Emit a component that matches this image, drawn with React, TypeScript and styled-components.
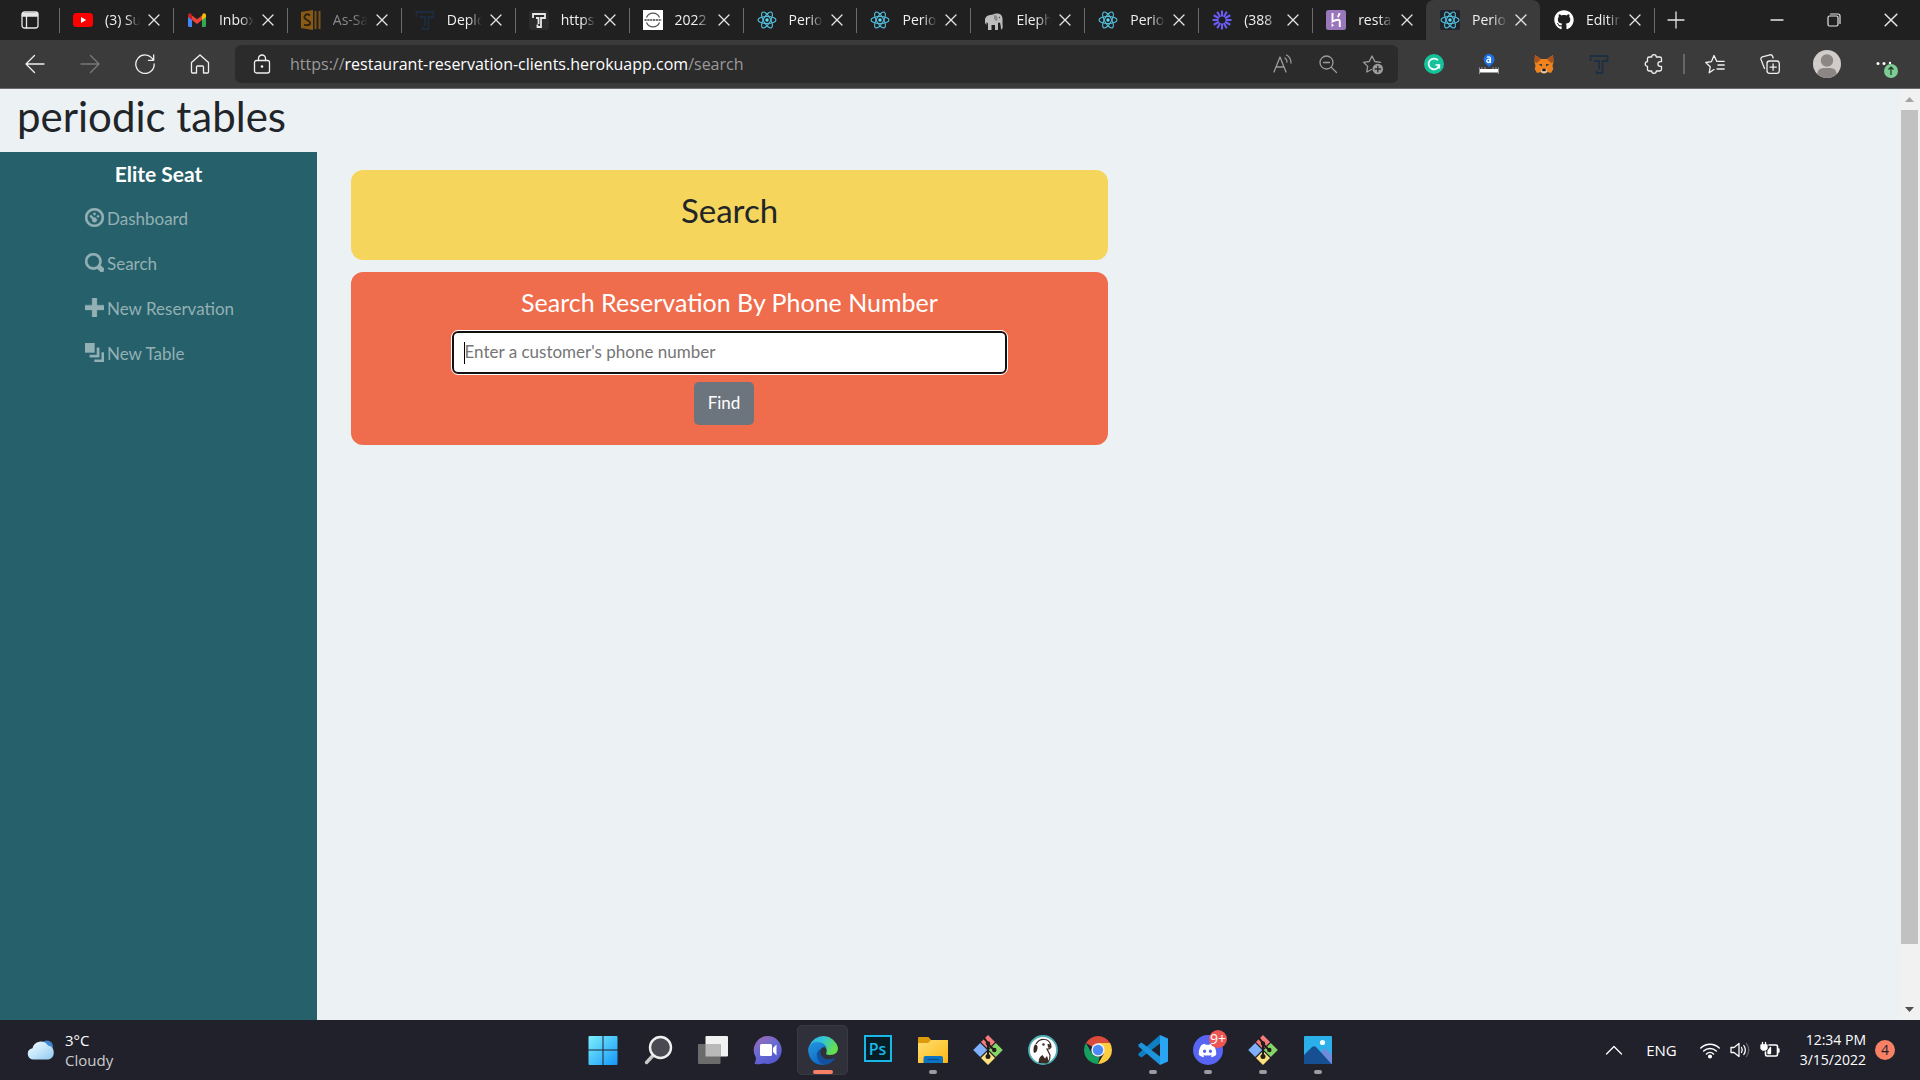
import React from "react";
import styled, { createGlobalStyle } from "styled-components";
import { FaDiscord, FaGithub } from "react-icons/fa";

const uiFont = `"Open Sans", "Noto Sans", sans-serif`;
const siteFont = `Lato, "Open Sans", sans-serif`;

const GlobalStyle = createGlobalStyle`
  *, *::before, *::after { box-sizing: border-box; }
  body { margin: 0; background: #ecf1f4; font-family: ${uiFont}; }
  button { border: 0; padding: 0; background: none; color: inherit; font: inherit; cursor: pointer; }
  a { color: inherit; text-decoration: none; }
  h1, h2, h3, h4, p, ul { margin: 0; padding: 0; }
  svg { display: block; flex: none; }
`;

const Screen = styled.div`
  display: flex;
  flex-direction: column;
  height: 100vh;
  overflow: hidden;
`;

/* ---------- tab strip ---------- */

const TabStrip = styled.header`
  display: flex;
  height: 40px;
  flex: none;
  background: #202020;
  color: #e6e6e6;
`;

const TabActions = styled.button`
  display: grid;
  place-items: center;
  width: 59px;
`;

const TabList = styled.div`
  display: flex;
  flex: 0 1 1595px;
  min-width: 0;
`;

const TabItem = styled.div<{ $active?: boolean; $divider: boolean }>`
  display: flex;
  align-items: center;
  flex: 1 1 0;
  min-width: 0;
  padding: 0 13px 0 14px;
  border-radius: 8px 8px 0 0;
  background: ${(p) => (p.$active ? "#3b3b3b" : "none")};
  background-image: ${(p) => (p.$divider ? "linear-gradient(#6b6b6b, #6b6b6b)" : "none")};
  background-size: 1px 25px;
  background-position: left 8px;
  background-repeat: no-repeat;
`;

const TabTitle = styled.span<{ $dim?: boolean }>`
  flex: 1;
  min-width: 0;
  margin: 0 8px 0 12px;
  overflow: hidden;
  white-space: nowrap;
  font-size: 14px;
  line-height: 20px;
  color: ${(p) => (p.$dim ? "#8a8a8a" : "#f0f0f0")};
  mask-image: linear-gradient(to right, #000 60%, transparent 100%);
`;

const TabClose = styled.button`
  display: grid;
  place-items: center;
  width: 12px;
  height: 20px;
`;

const NewTab = styled.button`
  display: grid;
  place-items: center;
  width: 44px;
  background: linear-gradient(#6b6b6b, #6b6b6b) left 8px / 1px 25px no-repeat;
`;

const WindowControls = styled.div`
  display: flex;
  margin-left: auto;
  padding-right: 1px;
`;

const WindowButton = styled.button`
  display: grid;
  place-items: center;
  width: 57px;
`;

/* ---------- toolbar ---------- */

const Toolbar = styled.nav`
  display: flex;
  align-items: center;
  height: 49px;
  flex: none;
  padding: 0 9px 0 7px;
  background: #3b3b3b;
  border-bottom: 1px solid #6a6a6a;
  color: #f0f0f0;
`;

const ToolButton = styled.button<{ $wide?: boolean }>`
  display: grid;
  place-items: center;
  width: ${(p) => (p.$wide ? 59 : 55)}px;
  height: 38px;
  flex: none;
`;

const AddressBar = styled.div`
  display: flex;
  align-items: center;
  flex: 1;
  min-width: 0;
  height: 38px;
  margin: 0 8px;
  padding: 0 3px 0 17px;
  border-radius: 6px;
  background: #2b2b2b;
`;

const Url = styled.a`
  flex: 1;
  min-width: 0;
  margin-left: 18px;
  overflow: hidden;
  white-space: nowrap;
  font-size: 16px;
  line-height: 24px;
  color: #9a9a9a;
`;

const UrlHost = styled.span`
  color: #ffffff;
`;

const AddressAction = styled.button`
  display: grid;
  place-items: center;
  width: 45px;
  height: 38px;
  color: #9c9c9c;
`;

const ToolDivider = styled.span`
  width: 2px;
  height: 20px;
  margin: 0 2px;
  background: #666666;
`;

/* ---------- web page ---------- */

const Viewport = styled.div`
  display: flex;
  flex: 1;
  min-height: 0;
`;

const Page = styled.div`
  display: flex;
  flex-direction: column;
  flex: 1;
  min-width: 0;
  font-family: ${siteFont};
  color: #212529;
`;

const SiteTitle = styled.h1`
  height: 63px;
  padding: 0 17px;
  font-size: 42px;
  line-height: 54px;
  font-weight: 400;
`;

const Body = styled.div`
  display: flex;
  flex: 1;
  min-height: 0;
`;

const Sidebar = styled.aside`
  width: 20%;
  max-width: 317px;
  flex: none;
  padding-top: 9px;
  background: #26606a;
  color: #ffffff;
`;

const Brand = styled.h2`
  font-size: 21px;
  line-height: 26px;
  font-weight: 700;
  text-align: center;
`;

const NavList = styled.ul`
  display: grid;
  gap: 21px;
  margin: 20px 0 0 85px;
  list-style: none;
`;

const NavLink = styled.a`
  display: flex;
  align-items: center;
  gap: 3px;
  height: 24px;
  font-size: 17px;
  line-height: 24px;
  color: #93b0b5;

  svg { margin-bottom: 4px; }
`;

const Main = styled.main`
  display: grid;
  grid-template-columns: 1fr 1fr;
  gap: 36px;
  align-items: start;
  flex: 1;
  padding: 18px 0 0 34px;
`;

const Column = styled.div`
  display: grid;
  gap: 12px;
`;

const TitleCard = styled.section`
  padding: 20px 14px 30px;
  border-radius: 12px;
  background: #f5d55c;
  text-align: center;
`;

const CardTitle = styled.h2`
  font-size: 33px;
  line-height: 40px;
  font-weight: 400;
`;

const SearchCard = styled.form`
  display: flex;
  flex-direction: column;
  align-items: center;
  padding: 14px 14px 20px;
  border-radius: 12px;
  background: #ef6c4d;
`;

const FieldLabel = styled.label`
  font-size: 25px;
  line-height: 32px;
  color: #ffffff;
`;

const PhoneInput = styled.input`
  width: 76%;
  height: 43px;
  margin: 13px 0 8px;
  padding: 0 10px 2px;
  border: 2px solid #101010;
  border-radius: 6px;
  outline: 1px solid #ffffff;
  caret-color: transparent;
  background: linear-gradient(#000, #000) 10px center / 1px 22px no-repeat #ffffff;
  font-family: ${siteFont};
  font-size: 17px;
  color: #212529;

  &::placeholder { color: #757575; opacity: 1; }
`;

const FindButton = styled.button`
  height: 43px;
  margin-right: 11px;
  padding: 0 14px 2px;
  border-radius: 5px;
  background: #6c757d;
  color: #ffffff;
  font-family: ${siteFont};
  font-size: 17px;
`;

const ScrollRail = styled.div`
  display: flex;
  flex-direction: column;
  width: 19px;
  flex: none;
  padding-right: 2px;
  background: #f1f1f1;
`;

const ScrollArrow = styled.button`
  display: grid;
  place-items: center;
  height: 21px;
  flex: none;
`;

const ScrollThumb = styled.div`
  flex: 834;
  background: #c1c1c1;
`;

const ScrollRest = styled.div`
  flex: 55;
`;

/* ---------- taskbar ---------- */

const Taskbar = styled.footer`
  display: grid;
  grid-template-columns: 1fr auto 1fr;
  align-items: center;
  height: 60px;
  flex: none;
  background: #21212c;
  color: #ffffff;
  font-size: 15px;
  line-height: 20px;
`;

const Weather = styled.button`
  display: flex;
  align-items: center;
  gap: 10px;
  margin-left: 27px;
  text-align: left;
`;

const WeatherText = styled.span`
  display: grid;
`;

const Muted = styled.span`
  color: #cccccc;
`;

const AppRow = styled.div`
  display: flex;
`;

const AppButton = styled.button<{ $active?: boolean }>`
  position: relative;
  display: grid;
  place-items: center;
  width: 51px;
  height: 50px;
  margin: 0 2px;
  border-radius: 5px;
  border: 1px solid ${(p) => (p.$active ? "#3a3a44" : "transparent")};
  background: ${(p) => (p.$active ? "#30303a" : "none")};
`;

const RunMark = styled.span<{ $active?: boolean }>`
  position: absolute;
  bottom: 0;
  left: 50%;
  translate: -50% 0;
  width: ${(p) => (p.$active ? 20 : 8)}px;
  height: 4px;
  border-radius: 2px;
  background: ${(p) => (p.$active ? "#f88064" : "#9b9ba0")};
`;

const CountBadge = styled.span`
  position: absolute;
  top: 4px;
  right: 5px;
  width: 18px;
  height: 18px;
  border-radius: 9px;
  background: #ee5555;
  font-size: 14px;
  line-height: 17px;
  text-align: center;
`;

const Tray = styled.div`
  display: flex;
  align-items: center;
  justify-content: flex-end;
  padding-right: 25px;
`;

const TrayButton = styled.button`
  display: grid;
  place-items: center;
  height: 40px;
  margin-right: 23px;
  font-size: 15px;
`;

const TrayStatus = styled.button`
  display: flex;
  align-items: center;
  gap: 10px;
  height: 40px;
  margin-right: 20px;
`;

const Clock = styled.button`
  display: grid;
  margin-right: 9px;
  text-align: right;
  font-size: 14px;
`;

const Notice = styled.button`
  width: 20px;
  height: 20px;
  border-radius: 10px;
  background: #f88064;
  color: #21212c;
  font-size: 14px;
  line-height: 20px;
`;

/* ---------- drawings ---------- */

type IconProps = { size?: number; box?: number; line?: number; children: React.ReactNode };

const LineIcon = ({ size = 20, box = 20, line = 1.3, children }: IconProps) => (
  <svg width={size} height={size} viewBox={`0 0 ${box} ${box}`} fill="none" stroke="currentColor" strokeWidth={line} strokeLinecap="round" strokeLinejoin="round" aria-hidden="true">
    {children}
  </svg>
);

const Art = ({ size = 20, box = 20, children }: IconProps) => (
  <svg width={size} height={size} viewBox={`0 0 ${box} ${box}`} aria-hidden="true">
    {children}
  </svg>
);

const Cross = ({ size = 12 }: { size?: number }) => (
  <LineIcon size={size} box={12}><path d="M1 1l10 10M11 1L1 11" /></LineIcon>
);

const YouTubeArt = () => (
  <Art><rect y="3" width="20" height="14" rx="3.5" fill="#f00" /><path d="M8 7l5.2 3L8 13z" fill="#fff" /></Art>
);

const GmailArt = () => (
  <Art>
    <path d="M1 5v10.500q0 1.500 1.500 1.500H5V8z" fill="#4285f4" />
    <path d="M19 5v10.500q0 1.500-1.500 1.500H15V8z" fill="#34a853" />
    <path d="M15 5.500V10l4-3V5q-.5-2.500-3-1.500z" fill="#fbbc04" />
    <path d="M5 5.500l5 3.800 5-3.800V10l-5 4-5-4z" fill="#ea4335" />
    <path d="M5 5.500V10L1 7V5q.5-2.500 3-1.500z" fill="#c5221f" />
  </Art>
);

const ScribeArt = () => (
  <Art>
    <path d="M0 2l12-2v20L0 18z" fill="#8a5a14" />
    <path d="M9 5.500Q6 3 4 5.500T6 10t3 4-6 .8" fill="none" stroke="#2a2115" strokeWidth="1.800" />
    <path d="M14.500 1v18M18.500 1v18" stroke="#7b5217" strokeWidth="2" />
  </Art>
);

const BracketTArt = ({ color, tile }: { color: string; tile?: boolean }) => (
  <Art>
    {tile && <rect width="20" height="20" rx="4" fill="#2c2c2c" />}
    <path d={tile ? "M4 8V4h12v4h-4v9H8.500v-2.500M7 8h2.500v6" : "M1.500 7V2h17v5h-5v12H7.500v-2.500M5 7h5v8.500"} fill="none" stroke={color} strokeWidth="1.800" />
  </Art>
);

const NissanArt = () => (
  <Art>
    <rect width="20" height="20" fill="#fff" />
    <path d="M3.500 7.500a7 7 0 0 1 13 0M3.500 12.500a7 7 0 0 0 13 0" fill="none" stroke="#555" strokeWidth="1.200" />
    <path d="M1.500 10h17" stroke="#444" strokeWidth="1.600" strokeDasharray="2.200 .6" />
  </Art>
);

const ReactArt = ({ tile }: { tile?: boolean }) => (
  <Art>
    {tile && <rect width="20" height="20" rx="2" fill="#20232a" />}
    <g fill="none" stroke="#53c1de" strokeWidth="1.100">
      <ellipse cx="10" cy="10" rx="9" ry="3.500" />
      <ellipse cx="10" cy="10" rx="9" ry="3.500" transform="rotate(60 10 10)" />
      <ellipse cx="10" cy="10" rx="9" ry="3.500" transform="rotate(120 10 10)" />
    </g>
    <circle cx="10" cy="10" r="1.700" fill="#61dafb" />
  </Art>
);

const ElephantArt = () => (
  <Art>
    <path d="M1 13V9q1-3.500 5-4l3-.5Q11 3 14 3.500q4 .5 4.500 5V14q.8 4-.5 5.500-1.500-.5-1.200-3L16 12.500l-2 .5v7h-3v-5H7.500v5H4v-6.500L2.500 12v3z" fill="#bdbdbd" />
    <path d="M10 5q3 0 3.500 3T12 11q-2.500-1-2-6" fill="#8c8c8c" />
    <circle cx="15.500" cy="7.500" r=".7" fill="#444" />
  </Art>
);

const BurstArt = () => (
  <Art>
    <g stroke="#6a5cf5" strokeWidth="2.100">
      {Array.from({ length: 12 }, (_, i) => (
        <path key={i} d="M10 6.500V.5" transform={`rotate(${i * 30} 10 10)`} />
      ))}
    </g>
  </Art>
);

const HerokuArt = () => (
  <Art>
    <rect width="20" height="20" rx="2.500" fill="#9a76bd" />
    <path d="M6.500 3v8.500q3-1.800 5.500-1.800 1.800 0 1.800 2V17M13.500 3q0 2-1.800 4" fill="none" stroke="#fff" strokeWidth="1.900" />
    <path d="M5.600 13.200L8 15.200l-2.400 2z" fill="#fff" />
  </Art>
);

const TabMenuArt = () => (
  <LineIcon size={18} box={18} line={1.3}>
    <rect x="1" y="1" width="16" height="16" rx="2.500" />
    <path d="M1.500 2.500h15v2.500h-15z" fill="currentColor" />
    <path d="M5.500 5v12" />
  </LineIcon>
);

const GrammarlyArt = () => (
  <Art>
    <circle cx="10" cy="10" r="10" fill="#15c39a" />
    <path d="M14 6.300A5.400 5.400 0 1 0 15.300 11h-3.800M15.300 11v3.500" fill="none" stroke="#fff" strokeWidth="1.700" />
  </Art>
);

const RulerArt = () => (
  <Art>
    <path d="M4.500 5.500a5.500 5.500 0 1 1 9.500 3.700L10 13 6 9.200z" fill="#1a73e8" />
    <circle cx="9.500" cy="6.800" r="1.700" fill="none" stroke="#fff" strokeWidth="1.300" />
    <path d="M8 3.200q3.400-1 3.400 1.500V9" fill="none" stroke="#fff" strokeWidth="1.300" />
    <path d="M.5 13.500v6.500M19.500 13.500v6.500M3 13v2M6 13v2M14 13v2M17 13v2" stroke="#999" />
    <rect x="1" y="15" width="18" height="3.500" fill="#fff" />
  </Art>
);

const FoxArt = () => (
  <Art>
    <path d="M1 1l6 4h6l6-4 .5 7-1 4 .8 3-2.300 4-4-1-1.500 1.500h-3L7 18l-4 1-2.300-4 .8-3-1-4z" fill="#f0831e" />
    <path d="M1 1l6 4-4 4-2.500-1zM19 1l-6 4 4 4 2.500-1z" fill="#a9541c" />
    <path d="M4.500 10.500l3.500-.5v2.300zM15.500 10.500l-3.500-.5v2.300z" fill="#233447" />
    <path d="M7.500 15h5l.5 3-1.500 1h-3L7 18z" fill="#d9cfc5" />
    <path d="M8.300 14.800h3.400v2.400H8.300z" fill="#161616" />
  </Art>
);

const AvatarArt = () => (
  <Art size={28} box={28}>
    <circle cx="14" cy="14" r="14" fill="#cfccc9" />
    <circle cx="14" cy="10.500" r="6.200" fill="#8c8784" />
    <path d="M4.300 24Q5 18 10.500 18h7q5.500 0 6.200 6A14 14 0 0 1 4.300 24z" fill="#8c8784" />
  </Art>
);

const MenuArt = () => (
  <svg width="28" height="28" viewBox="0 0 28 28" aria-hidden="true">
    <g fill="#fff"><circle cx="8" cy="13.500" r="1.500" /><circle cx="14" cy="13.500" r="1.500" /><circle cx="20" cy="13" r="1.200" /></g>
    <circle cx="21" cy="21" r="7" fill="#7ecb93" />
    <path d="M21 25v-8M18.500 19.500L21 17l2.500 2.500" fill="none" stroke="#1c3a25" strokeWidth="1.200" />
  </svg>
);

const CloudArt = () => (
  <svg width="28" height="22" viewBox="0 0 28 22" aria-hidden="true">
    <defs>
      <linearGradient id="cloud" x1="0" y1="0" x2="1" y2="1">
        <stop offset="0" stopColor="#f4fbff" /><stop offset=".5" stopColor="#c4e6fb" /><stop offset="1" stopColor="#8fc6ee" />
      </linearGradient>
    </defs>
    <circle cx="20" cy="7.500" r="6" fill="#3f86d2" />
    <path d="M6 20.500a5.700 5.700 0 0 1-.5-11.300A8.500 8.500 0 0 1 21 6.500a7.200 7.200 0 0 1 .5 14z" fill="url(#cloud)" />
  </svg>
);

const WindowsArt = () => (
  <Art size={30} box={30}>
    <defs>
      <linearGradient id="win" x1="0" y1="0" x2="1" y2="1" gradientUnits="objectBoundingBox">
        <stop offset="0" stopColor="#7df1fe" /><stop offset="1" stopColor="#1496f8" />
      </linearGradient>
    </defs>
    <path d="M.5 2q0-1 1-1h13v13.500H.5zM15.500 1h13q1 0 1 1v12.500h-14zM.5 15.500h14V30h-13q-1 0-1-1zM15.500 15.500h14V29q0 1-1 1h-13z" fill="url(#win)" />
  </Art>
);

const SearchArt = () => (
  <Art size={30} box={30}>
    <path d="M10 20.500l-6.500 7" stroke="#c9c9cb" strokeWidth="3.400" strokeLinecap="round" />
    <circle cx="17.500" cy="12.500" r="10.500" fill="#4a4a53" stroke="#f0f0f0" strokeWidth="2.400" />
  </Art>
);

const TaskViewArt = () => (
  <Art size={30} box={30}>
    <rect x="7.500" y="1" width="22.500" height="20.500" rx="1" fill="#f1f1f1" />
    <rect y="9" width="22.500" height="20" rx="1" fill="#6b6b6b" />
    <rect x="7.500" y="9" width="15" height="12.500" fill="#b9b9b9" />
  </Art>
);

const ChatArt = () => (
  <Art size={30} box={30}>
    <defs>
      <linearGradient id="chat" x1="0" y1="0" x2=".6" y2="1">
        <stop offset="0" stopColor="#a368b0" /><stop offset=".5" stopColor="#6c6ad2" /><stop offset="1" stopColor="#5558d0" />
      </linearGradient>
    </defs>
    <path d="M15 1a14 14 0 1 1-4 27.500Q6 30 1.500 28.700 3.500 25 2.700 22A14 14 0 0 1 15 1z" fill="url(#chat)" />
    <rect x="7" y="9" width="12" height="12" rx="1.500" fill="#fff" />
    <path d="M20 13l3.500-3.500v11L20 17z" fill="#fff" />
  </Art>
);

const EdgeArt = () => (
  <Art size={30} box={30}>
    <defs>
      <linearGradient id="edgeTop" x1="0" y1="0" x2="1" y2=".4">
        <stop offset="0" stopColor="#2aa8e8" /><stop offset=".5" stopColor="#35c6d2" /><stop offset="1" stopColor="#66e04c" />
      </linearGradient>
      <linearGradient id="edgeBody" x1="0" y1="0" x2=".5" y2="1">
        <stop offset="0" stopColor="#2497dd" /><stop offset="1" stopColor="#0f6ac8" />
      </linearGradient>
    </defs>
    <path d="M1 11.500A15 15 0 0 1 30 13q0 7-8 7-5 0-3.500-2.500Q20 13 14.500 10 8 7 1 11.500z" fill="url(#edgeTop)" />
    <path d="M0 15q1-8 9.500-8 7 0 9.500 6-4-2.500-7 2-3.500 9 6 12.500-1 2.500-4 2.500Q1.500 29 0 15z" fill="url(#edgeBody)" />
    <path d="M12.500 14q-5.500 3-3 9.500Q12 30 18 29.700q6-1.500 9.500-7Q16 27 12.500 19z" fill="#15509f" />
  </Art>
);

const PsIcon = styled.span`
  display: grid;
  place-items: center;
  width: 28px;
  height: 27px;
  margin-bottom: 3px;
  border: 2px solid #18b8e8;
  background: #061d26;
  color: #18b8e8;
  font-size: 16px;
  font-weight: 600;
  line-height: 20px;
`;

const FolderArt = () => (
  <Art size={30} box={30}>
    <defs>
      <linearGradient id="folder" x1="0" y1="0" x2="1" y2="1">
        <stop offset="0" stopColor="#ffdf72" /><stop offset="1" stopColor="#fdb714" />
      </linearGradient>
    </defs>
    <path d="M0 3q0-1 1-1h9.500l2.500 3v5H0z" fill="#dd9b0a" />
    <path d="M0 8h10l3-3h17v22q0 1-1 1H0z" fill="url(#folder)" />
    <path d="M5.500 28v-5q0-2 2-2H23q2 0 2 2v5z" fill="#0c73c2" />
    <path d="M9.500 24.500H21" stroke="#084f8c" strokeWidth="1.200" />
  </Art>
);

const GitArt = () => (
  <Art size={30} box={30}>
    <path d="M15 0l7 7-7 7-7-7z" fill="#f77b7b" />
    <path d="M7.200 8l7 7-7 7-7-7z" fill="#7fb0fb" />
    <path d="M22.800 8l7 7-7 7-7-7z" fill="#87d665" />
    <path d="M15 16l7 7-7 7-7-7z" fill="#fbe07d" />
    <path d="M10.500 2.500L15 8v15M15 9l6 6" fill="none" stroke="#221d1d" strokeWidth="2" />
    <g fill="#221d1d"><circle cx="15" cy="8.500" r="2.200" /><circle cx="21.300" cy="15" r="2.200" /><circle cx="15" cy="21.500" r="2.500" /></g>
  </Art>
);

const BeaverArt = () => (
  <Art size={30} box={30}>
    <circle cx="15" cy="15" r="14" fill="#fff" stroke="#4fb0b5" strokeWidth="1.800" />
    <path d="M8 9q3-5 8.500-4.500 4 0 6 4.500l.5 3q-1 2.500-4 2l3 6q.5 4-2 7" fill="none" stroke="#3a2b25" strokeWidth="1.200" />
    <path d="M7 9.500q3 0 2.500 4T6 18q-1.500-5 1-8.500zM10.500 28q0-6 4-8l2.500 3.500 2-2.500q2 4 .5 7.500zM19.500 9q3-.5 3.500 2t-3 1.500z" fill="#3a2b25" />
    <circle cx="15.500" cy="9.500" r="1.200" fill="#3a2b25" />
  </Art>
);

const ChromeArt = () => (
  <Art size={30} box={30}>
    <path d="M15 15L2.900 8A14 14 0 0 1 27.100 8z" fill="#db4a3a" />
    <path d="M15 8h12.100A14 14 0 0 1 15 29l6-10.500z" fill="#fdcd40" />
    <path d="M2.900 8L9 18.500q2.500 4 7.500 3.500L15 29A14 14 0 0 1 2.900 8z" fill="#16a05d" />
    <circle cx="15" cy="15" r="6.700" fill="#f3f3f3" />
    <circle cx="15" cy="15" r="5.200" fill="#4c8bf5" />
  </Art>
);

const CodeArt = () => (
  <Art size={30} box={30}>
    <path d="M22 0v8.500L3.500 22.500.5 20.500V18.500z" fill="#0f7fc4" />
    <path d="M22 30v-8.500L3.500 7.500.5 9.500v2z" fill="#1d93dc" />
    <path d="M22 0l8 3.500v23L22 30z" fill="#2aa5f3" />
  </Art>
);

const DiscordDisc = styled.span`
  display: grid;
  place-items: center;
  width: 30px;
  height: 30px;
  border-radius: 15px;
  background: #5865f2;
`;

const PhotosArt = () => (
  <Art size={30} box={30}>
    <rect x="1" y="1" width="28" height="28" rx="1" fill="#2cb0ea" />
    <path d="M15 20l7-7 7 7v9H15z" fill="#6e8bdc" />
    <path d="M1 20l8-8q2-1.500 4 0l15.500 17H1z" fill="#164f92" />
    <circle cx="19.500" cy="7.500" r="2.600" fill="#f3fbff" />
  </Art>
);

const oiPaths = {
  dashboard:
    "M4 0c-2.200 0-4 1.800-4 4s1.800 4 4 4 4-1.800 4-4-1.800-4-4-4zm0 1c1.660 0 3 1.340 3 3s-1.340 3-3 3-3-1.340-3-3 1.340-3 3-3zm0 1c-.28 0-.5.22-.5.5s.22.5.5.5.5-.22.5-.5-.22-.5-.5-.5zm-1.660 1a.5.5 0 0 0-.19.84l.91.91c-.02.08-.06.16-.06.25 0 .55.45 1 1 1s1-.45 1-1-.45-1-1-1c-.09 0-.17.04-.25.06l-.91-.91a.5.5 0 0 0-.44-.16.5.5 0 0 0-.06 0zm3.160 0c-.28 0-.5.22-.5.5s.22.5.5.5.5-.22.5-.5-.22-.5-.5-.5z",
  search:
    "M3.500 0c-1.930 0-3.500 1.570-3.500 3.500s1.570 3.500 3.500 3.500c.59 0 1.170-.14 1.660-.41a1 1 0 0 0 .13.13l1 1a1.020 1.020 0 1 0 1.440-1.440l-1-1a1 1 0 0 0-.16-.13c.27-.49.44-1.060.44-1.660 0-1.930-1.550-3.500-3.500-3.500zm0 1c1.390 0 2.500 1.110 2.500 2.500 0 .66-.24 1.270-.66 1.720l-.16.16c-.44.4-1.040.63-1.690.63-1.390 0-2.500-1.110-2.500-2.500s1.110-2.500 2.500-2.500z",
  plus: "M3 0v3h-3v2h3v3h2v-3h3v-2h-3v-3h-2z",
  layers: "M0 0v4h4v-4h-4zm5 2v3h-3v1h4v-4h-1zm2 2v3h-3v1h4v-4h-1z",
};

const NavIcon = ({ name }: { name: keyof typeof oiPaths }) => (
  <svg width="19" height="19" viewBox="0 0 8 8" fill="currentColor" stroke="currentColor" strokeWidth=".15" aria-hidden="true">
    <path d={oiPaths[name]} />
  </svg>
);

/* ---------- data ---------- */

type TabData = { title: string; icon: React.ReactNode; dim?: boolean; active?: boolean };

const tabs: TabData[] = [
  { title: "(3) Su", icon: <YouTubeArt /> },
  { title: "Inbox", icon: <GmailArt /> },
  { title: "As-Sa", icon: <ScribeArt />, dim: true },
  { title: "Deplo", icon: <BracketTArt color="#1c2c3e" /> },
  { title: "https:", icon: <BracketTArt color="#e8e8e8" tile /> },
  { title: "2022", icon: <NissanArt /> },
  { title: "Perio", icon: <ReactArt /> },
  { title: "Perio", icon: <ReactArt /> },
  { title: "Eleph", icon: <ElephantArt /> },
  { title: "Perio", icon: <ReactArt /> },
  { title: "(388", icon: <BurstArt /> },
  { title: "resta", icon: <HerokuArt /> },
  { title: "Perio", icon: <ReactArt tile />, active: true },
  { title: "Editin", icon: <FaGithub size={20} color="#fff" /> },
];

const navItems: { label: string; icon: keyof typeof oiPaths }[] = [
  { label: "Dashboard", icon: "dashboard" },
  { label: "Search", icon: "search" },
  { label: "New Reservation", icon: "plus" },
  { label: "New Table", icon: "layers" },
];

const apps: { name: string; icon: React.ReactNode; running?: boolean; active?: boolean; badge?: string }[] = [
  { name: "Start", icon: <WindowsArt /> },
  { name: "Search", icon: <SearchArt /> },
  { name: "Task view", icon: <TaskViewArt /> },
  { name: "Chat", icon: <ChatArt /> },
  { name: "Edge", icon: <EdgeArt />, running: true, active: true },
  { name: "Photoshop", icon: <PsIcon>Ps</PsIcon> },
  { name: "Files", icon: <FolderArt />, running: true },
  { name: "Git Bash", icon: <GitArt /> },
  { name: "DBeaver", icon: <BeaverArt /> },
  { name: "Chrome", icon: <ChromeArt /> },
  { name: "VS Code", icon: <CodeArt />, running: true },
  { name: "Discord", icon: <DiscordDisc><FaDiscord size={19} /></DiscordDisc>, running: true, badge: "9+" },
  { name: "Git GUI", icon: <GitArt />, running: true },
  { name: "Photos", icon: <PhotosArt />, running: true },
];

/* ---------- app ---------- */

const BrowserTabs = () => (
  <TabStrip>
    <TabActions aria-label="Tab actions"><TabMenuArt /></TabActions>
    <TabList>
      {tabs.map((tab, i) => (
        <TabItem key={i} $active={tab.active} $divider={!tab.active && !tabs[i - 1]?.active}>
          {tab.icon}
          <TabTitle $dim={tab.dim}>{tab.title}</TabTitle>
          <TabClose aria-label="Close tab"><Cross /></TabClose>
        </TabItem>
      ))}
    </TabList>
    <NewTab aria-label="New tab">
      <LineIcon size={18} box={18}><path d="M9 1v16M1 9h16" /></LineIcon>
    </NewTab>
    <WindowControls>
      <WindowButton aria-label="Minimize"><LineIcon size={14} box={14}><path d="M1 7h12" /></LineIcon></WindowButton>
      <WindowButton aria-label="Restore">
        <LineIcon size={14} box={14} line={1.2}>
          <rect x="1" y="3" width="10" height="10" rx="1.500" />
          <path d="M3.500 1H11q2 0 2 2v7.500" />
        </LineIcon>
      </WindowButton>
      <WindowButton aria-label="Close"><Cross size={14} /></WindowButton>
    </WindowControls>
  </TabStrip>
);

const BrowserToolbar = () => (
  <Toolbar>
    <ToolButton aria-label="Back"><LineIcon><path d="M19 10H1M9.500 1.500L1 10l8.500 8.500" /></LineIcon></ToolButton>
    <ToolButton aria-label="Forward">
      <LineIcon><path d="M1 10h18M10.500 1.500L19 10l-8.500 8.500" stroke="#7a7a7a" /></LineIcon>
    </ToolButton>
    <ToolButton aria-label="Refresh"><LineIcon><path d="M18.200 6A9.200 9.200 0 1 0 19.200 10M18.700 1v5.300h-5.300" /></LineIcon></ToolButton>
    <ToolButton aria-label="Home">
      <LineIcon><path d="M1.500 8.500L10 1l8.500 7.500V18q0 1-1 1h-4v-6q0-1-1-1h-5q-1 0-1 1v6h-4q-1 0-1-1z" /></LineIcon>
    </ToolButton>
    <AddressBar>
      <LineIcon><rect x="2.500" y="6.500" width="15" height="12.500" rx="2" /><path d="M6.500 6.500V4.500a3.500 3.500 0 0 1 7 0v2" /><circle cx="10" cy="12.500" r=".7" fill="currentColor" /></LineIcon>
      <Url href="#search">https://<UrlHost>restaurant-reservation-clients.herokuapp.com</UrlHost>/search</Url>
      <AddressAction aria-label="Read aloud">
        <LineIcon><path d="M1 18L7 3l6 15M3.200 13h7.600M12 4q2 1.500 2 4M13.500 1q4.500 2.500 4.500 8" /></LineIcon>
      </AddressAction>
      <AddressAction aria-label="Zoom"><LineIcon><circle cx="8.500" cy="8.500" r="6.500" /><path d="M13.500 13.500L18.500 18.500M5.500 8.500h6" /></LineIcon></AddressAction>
      <AddressAction aria-label="Add to favorites">
        <LineIcon size={22} box={22}>
          <path d="M9.500 16.500L4.700 19l1-5.600L1.500 9.300l5.700-.8L10 3l2.800 5.500 5.700.8" />
          <circle cx="15.800" cy="16" r="5.300" fill="currentColor" stroke="none" />
          <path d="M15.800 13.200v5.600M13 16h5.600" stroke="#2b2b2b" />
        </LineIcon>
      </AddressAction>
    </AddressBar>
    <ToolButton aria-label="Grammarly"><GrammarlyArt /></ToolButton>
    <ToolButton aria-label="Price ruler"><RulerArt /></ToolButton>
    <ToolButton aria-label="MetaMask"><FoxArt /></ToolButton>
    <ToolButton aria-label="Thinkful"><BracketTArt color="#1f2f42" /></ToolButton>
    <ToolButton aria-label="Extensions">
      <LineIcon><path d="M5.200 3h2.500a2.300 2.300 0 0 1 4.600 0h3.500q1.700 0 1.700 1.700v3h-1.300a2.300 2.300 0 0 0 0 4.600h1.300v3q0 1.700-1.700 1.700h-3.500a2.300 2.300 0 0 1-4.600 0H5.200q-1.700 0-1.700-1.700v-3a2.300 2.300 0 0 1 0-4.600v-3Q3.500 3 5.200 3z" /></LineIcon>
    </ToolButton>
    <ToolDivider />
    <ToolButton aria-label="Favorites">
      <LineIcon><path d="M9 15.500L4.200 18.800l1-6L.8 8.500l5.700-.9L9 1.500l2.700 5.800H19.200M13 11h6.200M12 15h7.200" /></LineIcon>
    </ToolButton>
    <ToolButton aria-label="Collections">
      <LineIcon><rect x="7" y="7" width="12.300" height="12.300" rx="2.500" /><path d="M13.100 10v6.300M10 13.100h6.300M4.500 14.500L1 5.500Q.5 3.500 2.300 2.800L10 .8q2-.3 2.600 1.500l.5 1.700" /></LineIcon>
    </ToolButton>
    <ToolButton $wide aria-label="Profile"><AvatarArt /></ToolButton>
    <ToolButton aria-label="Settings and more"><MenuArt /></ToolButton>
  </Toolbar>
);

const WebPage = () => (
  <Page>
    <SiteTitle>periodic tables</SiteTitle>
    <Body>
      <Sidebar>
        <Brand>Elite Seat</Brand>
        <NavList>
          {navItems.map((item) => (
            <li key={item.label}>
              <NavLink href="#nav"><NavIcon name={item.icon} />{item.label}</NavLink>
            </li>
          ))}
        </NavList>
      </Sidebar>
      <Main>
        <Column>
          <TitleCard><CardTitle>Search</CardTitle></TitleCard>
          <SearchCard onSubmit={(e) => e.preventDefault()}>
            <FieldLabel htmlFor="phone">Search Reservation By Phone Number</FieldLabel>
            <PhoneInput id="phone" type="text" placeholder="Enter a customer's phone number" />
            <FindButton type="submit">Find</FindButton>
          </SearchCard>
        </Column>
      </Main>
    </Body>
  </Page>
);

const Scrollbar = () => (
  <ScrollRail>
    <ScrollArrow aria-label="Scroll up"><svg width="9" height="5" viewBox="0 0 9 5"><path d="M0 5L4.500 0 9 5z" fill="#a3a3a3" /></svg></ScrollArrow>
    <ScrollThumb />
    <ScrollRest />
    <ScrollArrow aria-label="Scroll down"><svg width="9" height="5" viewBox="0 0 9 5"><path d="M0 0l4.500 5L9 0z" fill="#505050" /></svg></ScrollArrow>
  </ScrollRail>
);

const SystemTaskbar = () => (
  <Taskbar>
    <Weather>
      <CloudArt />
      <WeatherText><span>3°C</span><Muted>Cloudy</Muted></WeatherText>
    </Weather>
    <AppRow>
      {apps.map((app) => (
        <AppButton key={app.name} aria-label={app.name} $active={app.active}>
          {app.icon}
          {app.badge && <CountBadge>{app.badge}</CountBadge>}
          {app.running && <RunMark $active={app.active} />}
        </AppButton>
      ))}
    </AppRow>
    <Tray>
      <TrayButton aria-label="Hidden icons"><LineIcon size={18} box={18}><path d="M1.500 13L9 5.500l7.500 7.500" /></LineIcon></TrayButton>
      <TrayButton>ENG</TrayButton>
      <TrayStatus aria-label="Network, volume and battery">
        <LineIcon line={1.5}>
          <path d="M.8 8a13 13 0 0 1 18.400 0M3.700 11a9 9 0 0 1 12.600 0M6.500 14a5 5 0 0 1 7 0" />
          <circle cx="10" cy="16.500" r="1.300" fill="currentColor" />
        </LineIcon>
        <LineIcon>
          <path d="M1 7.500h3L9 3.500v13l-5-4H1zM11.500 7.500q1.500 2.500 0 5M13.800 5.500q3 4.500 0 9" />
          <path d="M16.500 3.500q4.500 6.500 0 13" stroke="#666672" />
        </LineIcon>
        <LineIcon>
          <path d="M9 5h7q1.500 0 1.500 1.500v8q0 1.500-1.500 1.500H7q-1.500 0-1.500-1.500V12M18.800 9v3" strokeWidth="1.600" />
          <path d="M1 5h6v3.500L5.500 10h-3L1 8.500zM2.500 2.500V5M5.500 2.500V5" fill="currentColor" />
          <path d="M8 13.500V11l2.500-3.500v6z" fill="currentColor" />
        </LineIcon>
      </TrayStatus>
      <Clock><span>12:34 PM</span><span>3/15/2022</span></Clock>
      <Notice aria-label="4 notifications">4</Notice>
    </Tray>
  </Taskbar>
);

export default function App() {
  return (
    <Screen>
      <GlobalStyle />
      <BrowserTabs />
      <BrowserToolbar />
      <Viewport>
        <WebPage />
        <Scrollbar />
      </Viewport>
      <SystemTaskbar />
    </Screen>
  );
}
